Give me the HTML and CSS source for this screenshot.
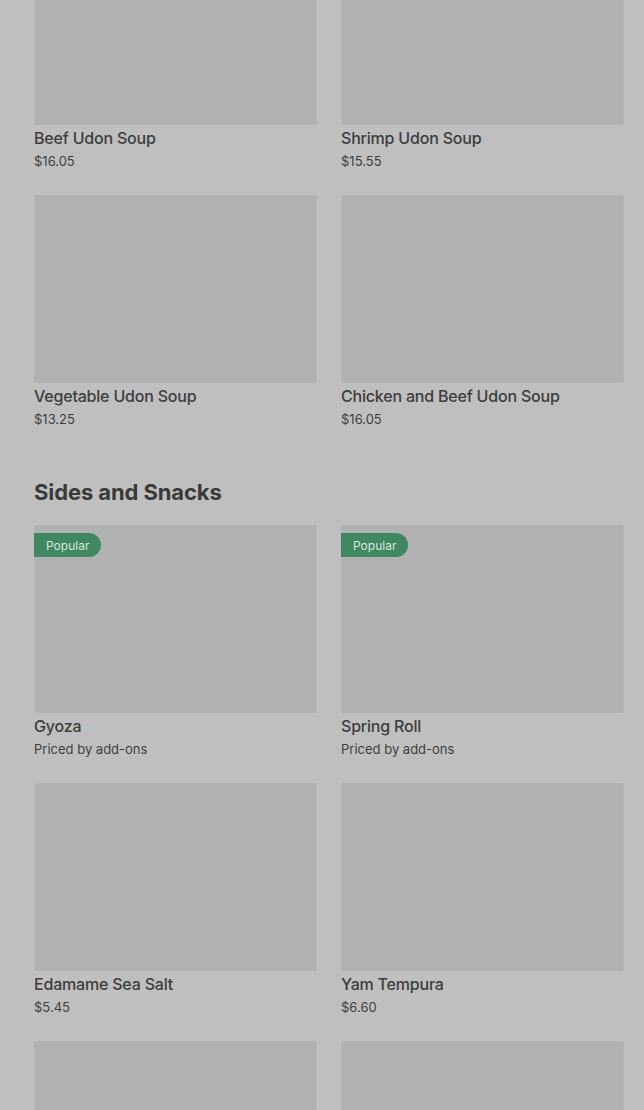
FILE: index.html
```html
<!DOCTYPE html>
<html>
<head>
<meta charset="utf-8">
<link rel="stylesheet" href="styles.css">
</head>
<body>
<main class="menu">
  <section class="section section-first">
    <div class="grid">
      <article class="card"><div class="thumb"></div><h3 class="name">Beef Udon Soup</h3><p class="price">$16.05</p></article>
      <article class="card"><div class="thumb"></div><h3 class="name">Shrimp Udon Soup</h3><p class="price">$15.55</p></article>
      <article class="card"><div class="thumb"></div><h3 class="name">Vegetable Udon Soup</h3><p class="price">$13.25</p></article>
      <article class="card"><div class="thumb"></div><h3 class="name">Chicken and Beef Udon Soup</h3><p class="price">$16.05</p></article>
    </div>
  </section>
  <section class="section">
    <h2 class="section-title">Sides and Snacks</h2>
    <div class="grid">
      <article class="card"><div class="thumb"><span class="badge">Popular</span></div><h3 class="name">Gyoza</h3><p class="price">Priced by add-ons</p></article>
      <article class="card"><div class="thumb"><span class="badge">Popular</span></div><h3 class="name">Spring Roll</h3><p class="price">Priced by add-ons</p></article>
      <article class="card"><div class="thumb"></div><h3 class="name">Edamame Sea Salt</h3><p class="price">$5.45</p></article>
      <article class="card"><div class="thumb"></div><h3 class="name">Yam Tempura</h3><p class="price">$6.60</p></article>
      <article class="card"><div class="thumb"></div><h3 class="name">&nbsp;</h3><p class="price">&nbsp;</p></article>
      <article class="card"><div class="thumb"></div><h3 class="name">&nbsp;</h3><p class="price">&nbsp;</p></article>
    </div>
  </section>
</main>
</body>
</html>
```

FILE: styles.css
```css
html, body {
  margin: 0;
  padding: 0;
  background: #bfbfbf;
  overflow: hidden;
}
body {
  font-family: Inter, "Noto Sans", "Liberation Sans", sans-serif;
  color: #3b3b3b;
}
.menu {
  padding: 0 20px 0 34px;
}
.section-first {
  margin-top: -63px;
}
.grid {
  display: grid;
  grid-template-columns: 1fr 1fr;
  column-gap: 24px;
}
.card {
  height: 258px;
  margin: 0;
}
.thumb {
  position: relative;
  height: 188px;
  background: #b1b1b1;
  border-radius: 3px;
  box-shadow: inset 0 0 0 1px #b4b4b4;
}
.name {
  margin: 0;
  padding-top: 3px;
  font-size: 16px;
  line-height: 20px;
  font-weight: 500;
  color: #3d3d3d;
  letter-spacing: -0.2px;
}
.price {
  margin: 4px 0 0;
  font-size: 13px;
  line-height: 18px;
  color: #3f3f3f;
  letter-spacing: 0;
}
.section-title {
  margin: 25px 0 19px;
  font-size: 22px;
  line-height: 28px;
  font-weight: 700;
  letter-spacing: -0.1px;
  color: #3a3a3a;
}
.badge {
  position: absolute;
  left: 0;
  top: 8px;
  height: 24px;
  padding: 0 12px;
  display: flex;
  align-items: center;
  background: #3f8862;
  color: #d6e6db;
  font-size: 12px;
  border-radius: 0 12px 12px 0;
}
```
